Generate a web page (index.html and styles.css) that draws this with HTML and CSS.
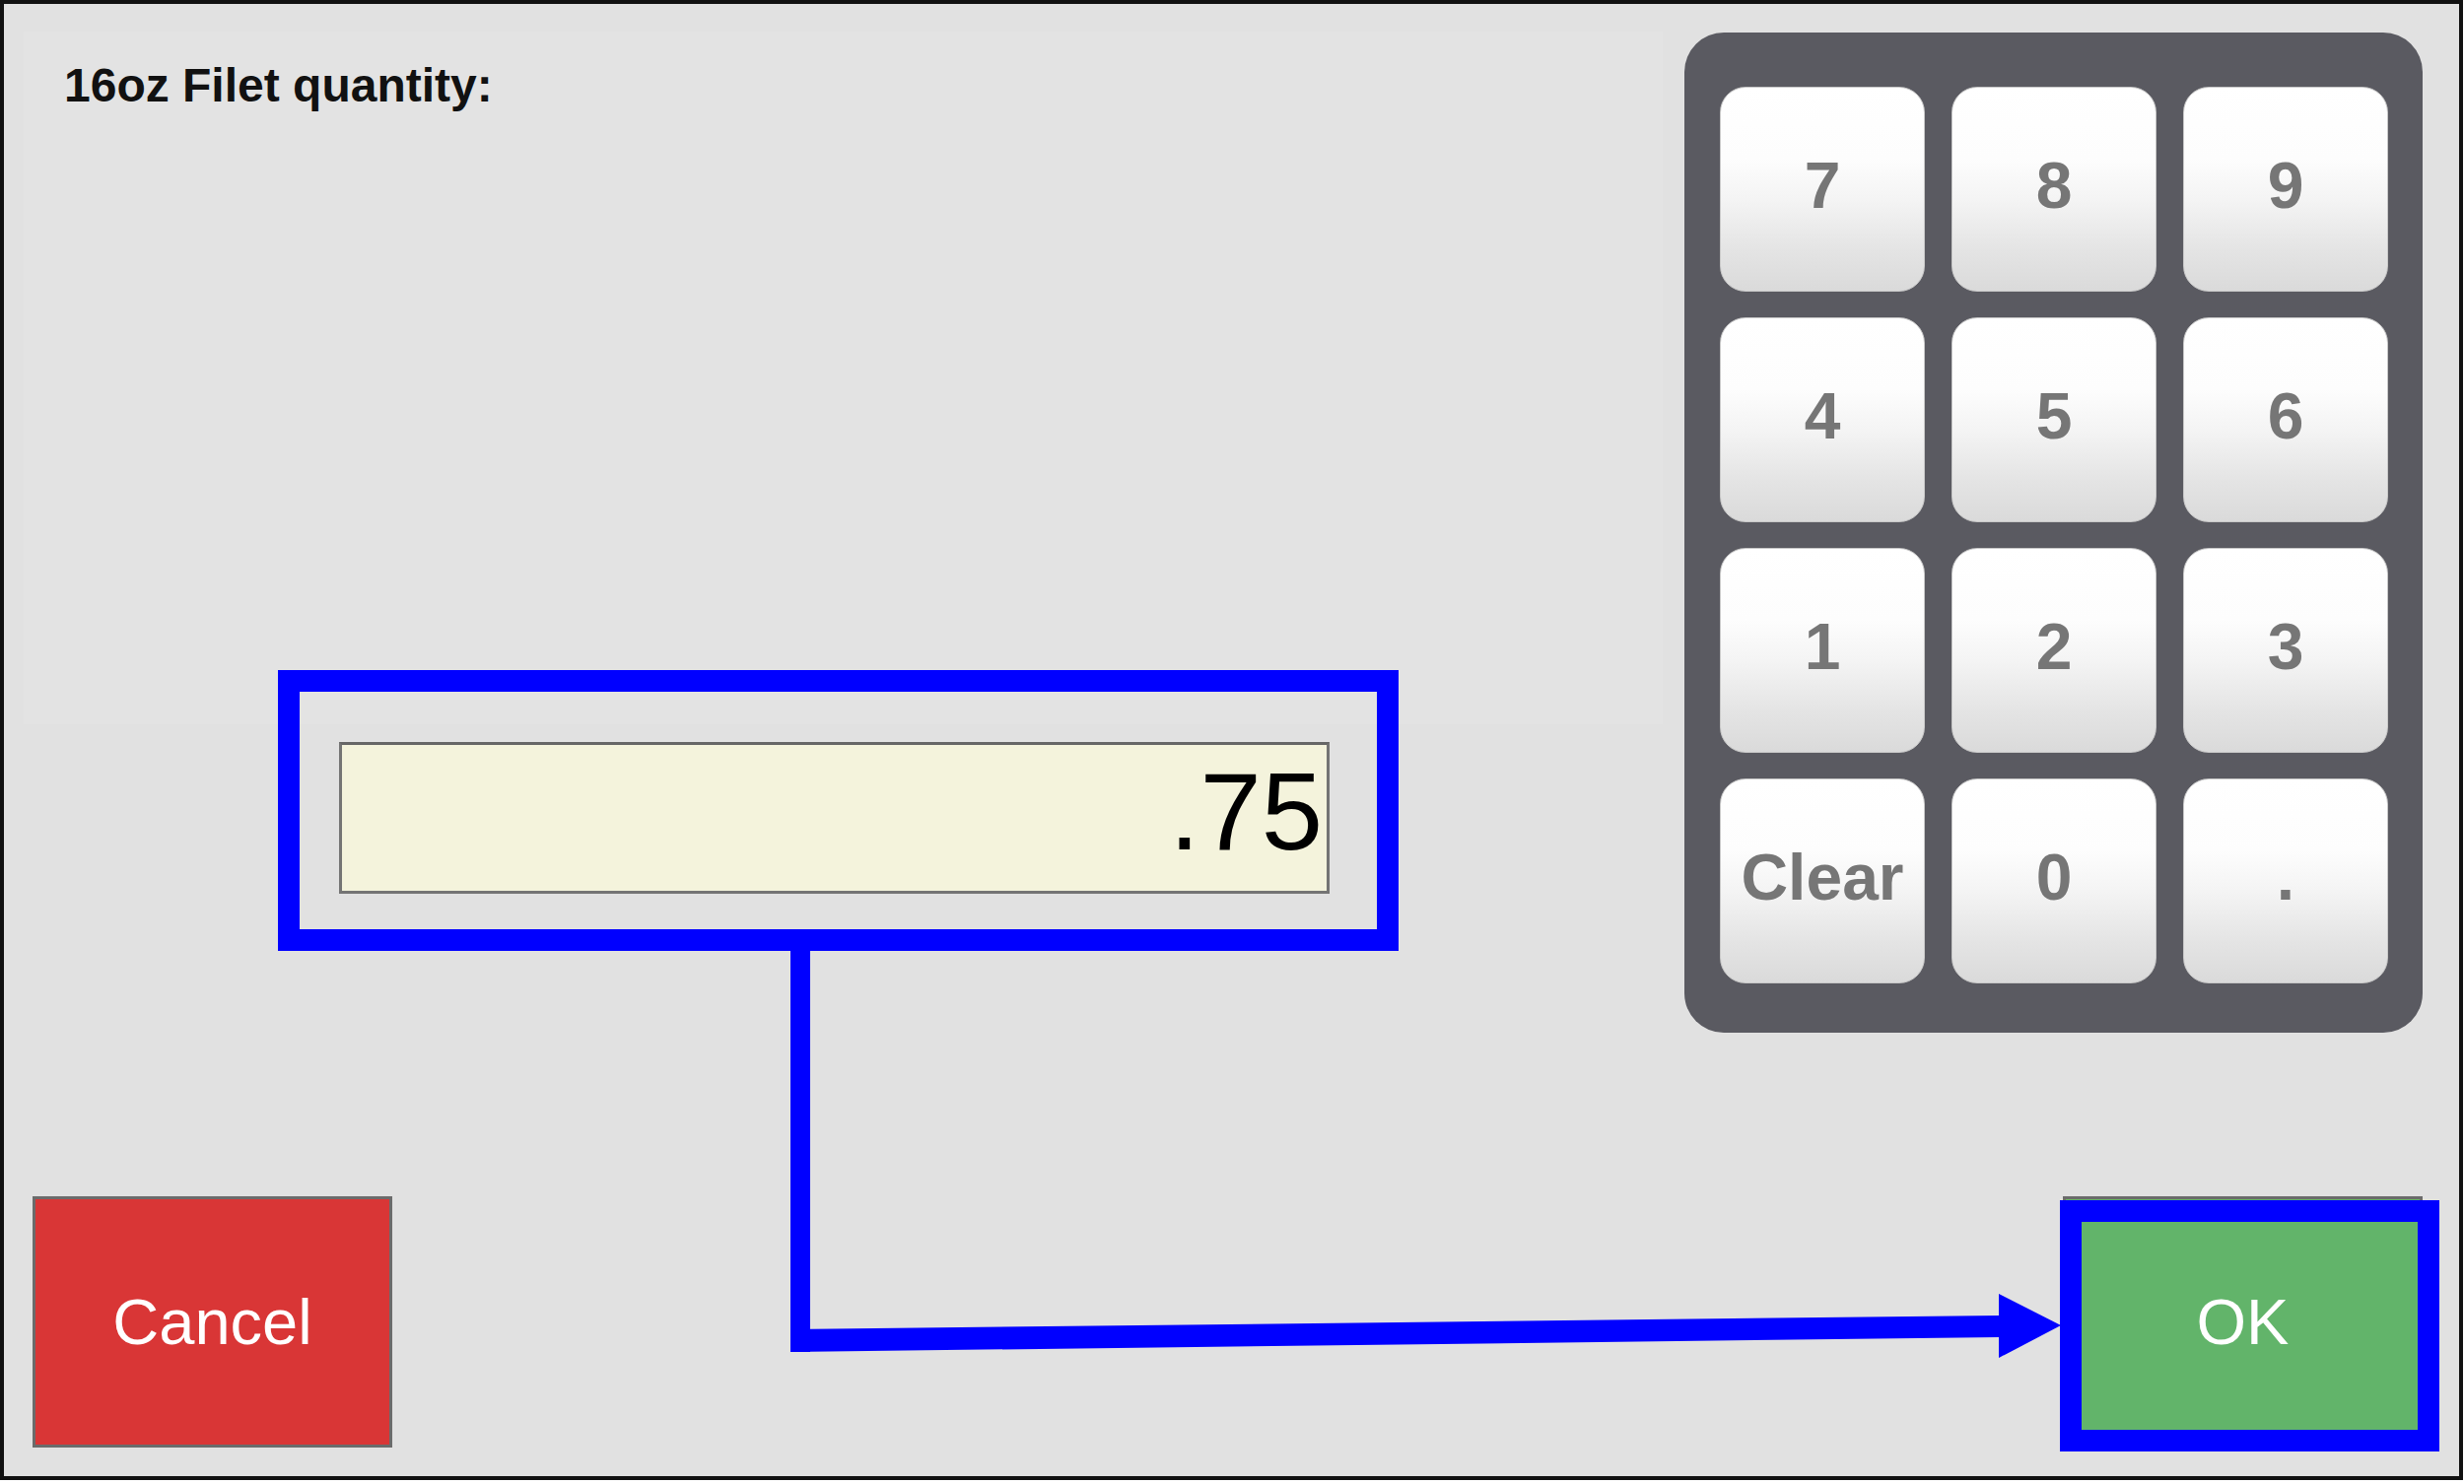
FILE: index.html
```html
<!doctype html>
<html>

<head>
    <meta charset="utf-8" />
    <title>Quantity</title>
    <link rel="stylesheet" href="styles.css">
</head>

<body>
    <div id="wrap">
        <div class="main">
            <div class="left">
                <div class="prompt">
                    <p class="title">16oz Filet quantity:</p>
                </div>
                <div class="display">.75</div>
            </div>
            <ul class="keypad">
                <li>7</li>
                <li>8</li>
                <li>9</li>
                <li>4</li>
                <li>5</li>
                <li>6</li>
                <li>1</li>
                <li>2</li>
                <li>3</li>
                <li>Clear</li>
                <li>0</li>
                <li>.</li>
            </ul>
        </div>
        <div class="actions">
            <a href="javascript:;" class="btn cancel">Cancel</a>
            <a href="javascript:;" class="btn ok">OK</a>
        </div>
    </div>

    <!-- 标注层: 蓝框 + 箭头 -->
    <svg class="marks" width="2500" height="1506" viewBox="0 0 2500 1506">
        <rect x="293" y="691" width="1115" height="263" fill="none" stroke="#0000ff" stroke-width="22" />
        <rect x="2101" y="1229" width="363" height="233" fill="none" stroke="#0000ff" stroke-width="22" />
        <rect x="802" y="960" width="20" height="412" fill="#0000ff" />
        <polygon points="802,1349 2030,1335 2030,1357 802,1372" fill="#0000ff" />
        <polygon points="2028,1313 2091,1345 2028,1378" fill="#0000ff" />
    </svg>
</body>

</html>
```

FILE: styles.css
```css
* {
    margin: 0;
    padding: 0;
}

ul,
li {
    list-style: none;
}

a {
    text-decoration: none;
}

html,
body {
    height: 100%;
    overflow: hidden;
    background: #ffffff;
}

body {
    position: relative;
    font-family: "Liberation Sans", Arial, sans-serif;
}

#wrap {
    box-sizing: border-box;
    width: 2499px;
    height: 1502px;
    border: 4px solid #111111;
    background: #e1e1e1;
    padding: 28px 37px 29px 20px;
    display: flex;
    flex-direction: column;
}

#wrap .main {
    display: flex;
    gap: 22px;
}

#wrap .left {
    width: 1663px;
}

#wrap .prompt {
    height: 703px;
    background: #e3e3e3;
    padding: 27px 0 0 41px;
    box-sizing: border-box;
}

#wrap .title {
    font-size: 48px;
    font-weight: 700;
    color: #111111;
}

#wrap .display {
    box-sizing: border-box;
    width: 1005px;
    height: 154px;
    margin: 18px 0 0 320px;
    border: 3px solid #747474;
    border-top-color: #666666;
    background: #f4f3dc;
    color: #000000;
    font-size: 112px;
    line-height: 136px;
    padding: 0 4px 12px 0;
    text-align: right;
}

#wrap .keypad {
    margin-top: 1px;
    width: 749px;
    box-sizing: border-box;
    padding: 55px 35px 50px 36px;
    background: #5a5a61;
    border-radius: 40px;
    display: grid;
    grid-template-columns: repeat(3, 208px);
    grid-auto-rows: 208px;
    column-gap: 27px;
    row-gap: 26px;
}

#wrap .keypad li {
    box-sizing: border-box;
    border: 1px solid #c8c8c8;
    border-radius: 26px;
    background: linear-gradient(#ffffff 0%, #fdfdfd 35%, #f4f4f4 55%, #e4e4e4 80%, #dadada 100%);
    display: flex;
    align-items: center;
    justify-content: center;
    padding-bottom: 8px;
    font-size: 66px;
    font-weight: 700;
    color: #767676;
}

#wrap .actions {
    margin-top: auto;
    display: flex;
    justify-content: space-between;
    padding-left: 9px;
}

#wrap .btn {
    box-sizing: border-box;
    width: 365px;
    height: 255px;
    border: 3px solid #6b6b6b;
    display: flex;
    align-items: center;
    justify-content: center;
    font-size: 65px;
    color: #ffffff;
}

#wrap .cancel {
    background: #d93636;
}

#wrap .ok {
    background: #62b46a;
}

.marks {
    position: absolute;
    top: 0;
    left: 0;
    pointer-events: none;
}
```
